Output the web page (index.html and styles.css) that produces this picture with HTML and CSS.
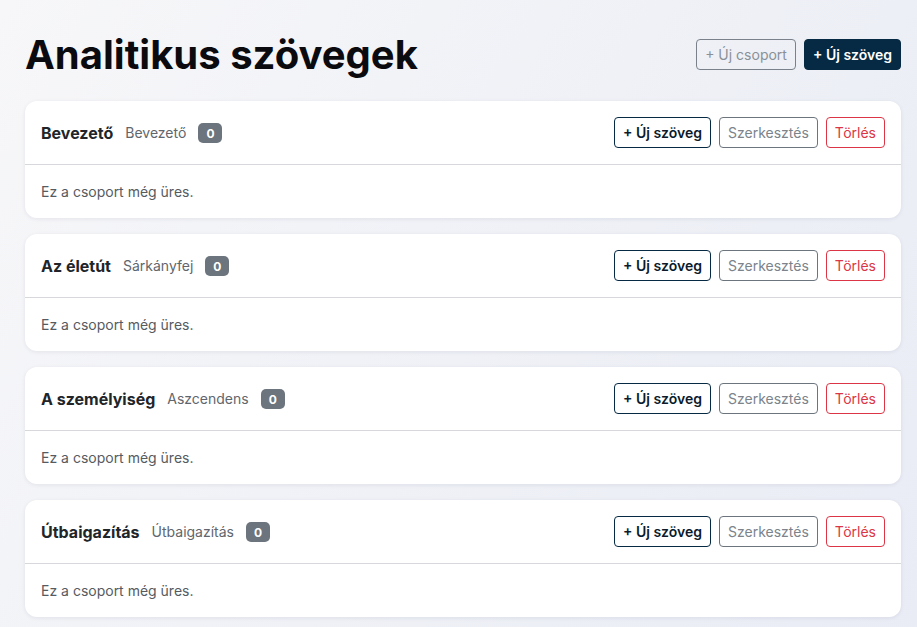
FILE: index.html
```html
<!DOCTYPE html>
<html lang="hu">
<head>
  <meta charset="UTF-8">
  <meta name="viewport" content="width=device-width, initial-scale=1.0">
  <title>Analitikus szövegek</title>
  <link rel="stylesheet" href="styles.css">
</head>
<body>
  <div class="page">
    <div class="page-head">
      <h1>Analitikus szövegek</h1>
      <div class="actions">
        <button class="btn btn-light-outline">+ Új csoport</button>
        <button class="btn btn-dark">+ Új szöveg</button>
      </div>
    </div>

    <div class="group">
      <div class="group-head">
        <div class="group-title">
          <span class="name">Bevezető</span>
          <span class="sub">Bevezető</span>
          <span class="badge">0</span>
        </div>
        <div class="actions">
          <button class="btn btn-dark-outline">+ Új szöveg</button>
          <button class="btn btn-gray-outline">Szerkesztés</button>
          <button class="btn btn-red-outline">Törlés</button>
        </div>
      </div>
      <div class="group-body">Ez a csoport még üres.</div>
    </div>

    <div class="group">
      <div class="group-head">
        <div class="group-title">
          <span class="name">Az életút</span>
          <span class="sub">Sárkányfej</span>
          <span class="badge">0</span>
        </div>
        <div class="actions">
          <button class="btn btn-dark-outline">+ Új szöveg</button>
          <button class="btn btn-gray-outline">Szerkesztés</button>
          <button class="btn btn-red-outline">Törlés</button>
        </div>
      </div>
      <div class="group-body">Ez a csoport még üres.</div>
    </div>

    <div class="group">
      <div class="group-head">
        <div class="group-title">
          <span class="name">A személyiség</span>
          <span class="sub">Aszcendens</span>
          <span class="badge">0</span>
        </div>
        <div class="actions">
          <button class="btn btn-dark-outline">+ Új szöveg</button>
          <button class="btn btn-gray-outline">Szerkesztés</button>
          <button class="btn btn-red-outline">Törlés</button>
        </div>
      </div>
      <div class="group-body">Ez a csoport még üres.</div>
    </div>

    <div class="group">
      <div class="group-head">
        <div class="group-title">
          <span class="name">Útbaigazítás</span>
          <span class="sub">Útbaigazítás</span>
          <span class="badge">0</span>
        </div>
        <div class="actions">
          <button class="btn btn-dark-outline">+ Új szöveg</button>
          <button class="btn btn-gray-outline">Szerkesztés</button>
          <button class="btn btn-red-outline">Törlés</button>
        </div>
      </div>
      <div class="group-body">Ez a csoport még üres.</div>
    </div>
  </div>
</body>
</html>
```

FILE: styles.css
```css
* {
  box-sizing: border-box;
}
body {
  margin: 0;
  font-family: Inter, "Liberation Sans", sans-serif;
  color: #212529;
  background: linear-gradient(120deg, #f7f7f9 0%, #eef0f6 60%, #e9ecf5 100%);
  min-height: 100vh;
}
.page {
  padding: 28px 16px 16px 25px;
}
.page-head {
  display: flex;
  align-items: center;
  justify-content: space-between;
  margin-bottom: 20px;
}
h1 {
  margin: 0;
  font-size: 40px;
  font-weight: 700;
  line-height: 53px;
  color: #0b0b0f;
}
.actions {
  display: flex;
  gap: 8px;
}
.btn {
  font-family: inherit;
  font-size: 14px;
  line-height: 21px;
  padding: 4px 8px;
  border-radius: 4px;
  border: 1px solid transparent;
  background: transparent;
  cursor: pointer;
}
.btn-light-outline {
  border-color: #7a818a;
  color: #8a9098;
}
.btn-dark {
  background: #062a43;
  border-color: #062a43;
  color: #fff;
  font-weight: 600;
}
.btn-dark-outline {
  border-color: #062a43;
  color: #0b1b2b;
  font-weight: 600;
}
.btn-gray-outline {
  border-color: #6c757d;
  color: #7b838b;
}
.btn-red-outline {
  border-color: #dc3545;
  color: #dc3545;
}
.group {
  background: #fff;
  border-radius: 12px;
  box-shadow: 0 1px 4px rgba(20, 30, 60, 0.08);
  margin-bottom: 16px;
}
.group-head {
  display: flex;
  align-items: center;
  justify-content: space-between;
  padding: 16px;
  border-bottom: 1px solid #d6d8db;
}
.group-title {
  display: flex;
  align-items: center;
  gap: 12px;
}
.name {
  font-size: 16px;
  font-weight: 700;
  color: #212529;
}
.sub {
  font-size: 14px;
  color: #5f666d;
}
.badge {
  background: #6c757d;
  color: #fff;
  font-size: 12px;
  font-weight: 700;
  padding: 4px 8px 3px;
  border-radius: 5px;
  line-height: 13px;
}
.group-body {
  padding: 16px;
  font-size: 14px;
  line-height: 21px;
  color: #555b61;
}
```
